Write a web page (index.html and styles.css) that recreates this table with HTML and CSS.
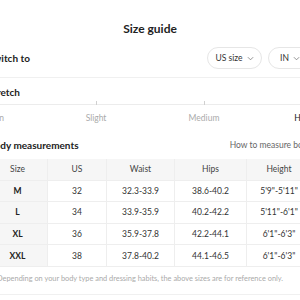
FILE: index.html
```html
<!DOCTYPE html>
<html>
<head>
<meta charset="utf-8">
<link rel="stylesheet" href="styles.css">
</head>
<body>
<div class="page">
  <div class="title">Size guide</div>
  <div class="switch-row">
    <div class="label">Switch to</div>
    <div class="pills">
      <div class="pill">US size <svg class="chev" viewBox="0 0 8 5" width="7" height="5"><path d="M1 1 L4 4 L7 1" fill="none" stroke="#777" stroke-width="0.9"/></svg></div>
      <div class="pill pill-in">IN <svg class="chev" viewBox="0 0 8 5" width="7" height="5"><path d="M1 1 L4 4 L7 1" fill="none" stroke="#777" stroke-width="0.9"/></svg></div>
    </div>
  </div>
  <div class="label stretch-label">Stretch</div>
  <div class="slider">
    <div class="track">
      <span class="tick t1"></span>
      <span class="tick t2"></span>
    </div>
    <div class="marks">
      <span class="m0">Non</span>
      <span class="m1">Slight</span>
      <span class="m2">Medium</span>
      <span class="m3">High</span>
    </div>
  </div>
  <div class="measure-row">
    <div class="label">Body measurements</div>
    <div class="how">How to measure body</div>
  </div>
  <div class="grid">
    <div class="c h s">Size</div><div class="c h">US</div><div class="c h">Waist</div><div class="c h">Hips</div><div class="c h">Height</div>
    <div class="c s b">M</div><div class="c">32</div><div class="c">32.3-33.9</div><div class="c">38.6-40.2</div><div class="c">5'9"-5'11"</div>
    <div class="c s b">L</div><div class="c">34</div><div class="c">33.9-35.9</div><div class="c">40.2-42.2</div><div class="c">5'11"-6'1"</div>
    <div class="c s b">XL</div><div class="c">36</div><div class="c">35.9-37.8</div><div class="c">42.2-44.1</div><div class="c">6'1"-6'3"</div>
    <div class="c s b">XXL</div><div class="c">38</div><div class="c">37.8-40.2</div><div class="c">44.1-46.5</div><div class="c">6'1"-6'3"</div>
  </div>
  <div class="note">Depending on your body type and dressing habits, the above sizes are for reference only.</div>
</div>
</body>
</html>
```
FILE: styles.css
```css
html, body {
  margin: 0;
  padding: 0;
  background: #fff;
  overflow: hidden;
}
body {
  font-family: Lato, "Noto Sans", sans-serif;
  color: #222;
}
.page {
  width: 324px;
  margin-left: -12px;
}
.title {
  margin-top: 20px;
  height: 18px;
  line-height: 18px;
  text-align: center;
  font-size: 12px;
  font-weight: 700;
  color: #222;
}
.switch-row {
  margin-top: 9px;
  display: flex;
  align-items: center;
  justify-content: space-between;
  padding-bottom: 8px;
  border-bottom: 1px solid #f0f0f0;
}
.label {
  font-size: 10px;
  font-weight: 700;
  line-height: 14px;
  color: #222;
}
.pills {
  display: flex;
  gap: 6px;
}
.pill {
  box-sizing: border-box;
  border: 1px solid #e6e6e6;
  border-radius: 11px;
  display: flex;
  align-items: center;
  justify-content: center;
  gap: 4px;
  font-size: 8.5px;
  color: #333;
  width: 55px;
  height: 22px;
}
.pill-in {
  width: 44px;
}
.chev {
  display: block;
}
.stretch-label {
  margin-top: 7px;
}
.slider {
  margin-top: 5px;
}
.track {
  height: 1px;
  background: #ececec;
  display: grid;
  grid-template-columns: repeat(6, 1fr);
  align-items: end;
}
.tick {
  width: 1px;
  height: 4px;
  background: #d0d0d0;
  justify-self: center;
  margin-top: -3px;
}
.t1 { grid-column: 2 / 4; }
.t2 { grid-column: 4 / 6; }
.marks {
  margin-top: 7px;
  display: grid;
  grid-template-columns: repeat(6, 1fr);
  font-size: 8.5px;
  line-height: 12px;
  color: #aaa;
}
.m0 { grid-column: 1; justify-self: start; }
.m1 { grid-column: 2 / 4; justify-self: center; }
.m2 { grid-column: 4 / 6; justify-self: center; }
.m3 { grid-column: 6; justify-self: end; color: #222; }
.measure-row {
  margin-top: 14px;
  display: flex;
  justify-content: space-between;
  align-items: center;
}
.how {
  font-size: 8.5px;
  color: #666;
}
.grid {
  margin-top: 7px;
  display: grid;
  grid-template-columns: 60px 59px 68px 72px 65px;
  grid-auto-rows: 21.6px;
}
.c {
  display: flex;
  align-items: center;
  justify-content: center;
  font-size: 8.5px;
  color: #333;
  border-bottom: 1px solid #eeeeee;
  border-right: 1px solid #eeeeee;
  box-sizing: border-box;
}
.h {
  background: #f6f6f6;
  color: #444;
}
.s {
  background: #f6f6f6;
}
.b {
  font-weight: 700;
  color: #222;
}
.note {
  margin-top: 6px;
  padding-left: 9px;
  font-size: 7.4px;
  line-height: 12px;
  color: #aaa;
  white-space: nowrap;
  padding-bottom: 9px;
  border-bottom: 1px solid #f0f0f0;
}
```
